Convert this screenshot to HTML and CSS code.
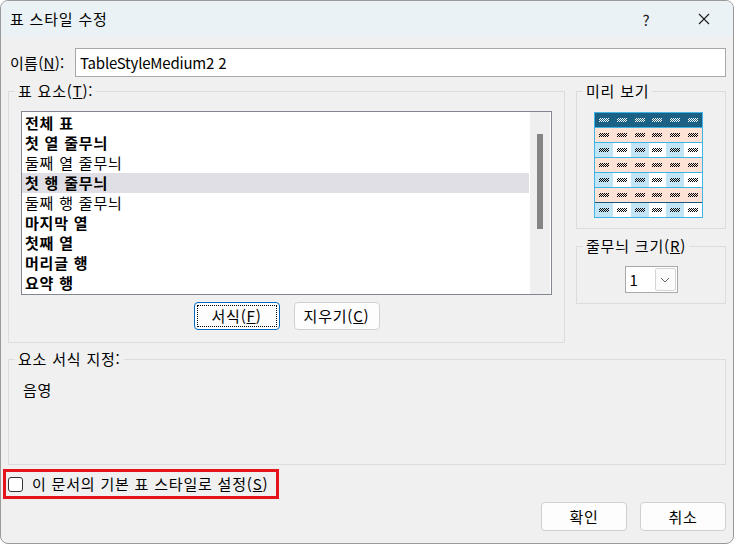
FILE: index.html
```html
<!DOCTYPE html>
<html lang="ko">
<head>
<meta charset="utf-8">
<title>표 스타일 수정</title>
<link rel="stylesheet" href="styles.css">
</head>
<body>
<div class="window">
  <div class="titlebar">
    <span class="title">표 스타일 수정</span>
    <span class="tb-btn help">?</span>
    <span class="tb-btn close"><svg width="12" height="12" viewBox="0 0 12 12"><path d="M1 1L11 11M11 1L1 11" stroke="#1a1a1a" stroke-width="1.1" fill="none"/></svg></span>
  </div>
  <div class="content">
    <div class="name-row">
      <span class="name-label">이름(<u>N</u>):</span>
      <div class="textbox">TableStyleMedium2 2</div>
    </div>
    <div class="main">
      <fieldset class="group elements">
        <legend>표 요소(<u>T</u>):</legend>
        <div class="listbox">
          <ul class="items">
            <li class="b">전체 표</li>
            <li class="b">첫 열 줄무늬</li>
            <li>둘째 열 줄무늬</li>
            <li class="b sel">첫 행 줄무늬</li>
            <li>둘째 행 줄무늬</li>
            <li class="b">마지막 열</li>
            <li class="b">첫째 열</li>
            <li class="b">머리글 행</li>
            <li class="b">요약 행</li>
          </ul>
          <div class="scrollbar"><div class="thumb"></div></div>
        </div>
        <div class="btn-row">
          <button class="btn focused"><span class="focus-ring">서식(<u>F</u>)</span></button>
          <button class="btn">지우기(<u>C</u>)</button>
        </div>
      </fieldset>
      <div class="side">
        <fieldset class="group preview">
          <legend>미리 보기</legend>
          <div class="ptable">
            <div class="prow head"><i><b></b></i><i><b></b></i><i><b></b></i><i><b></b></i><i><b></b></i><i><b></b></i></div>
            <div class="prow band"><i><b></b></i><i><b></b></i><i><b></b></i><i><b></b></i><i><b></b></i><i><b></b></i></div>
            <div class="prow cols"><i><b></b></i><i><b></b></i><i><b></b></i><i><b></b></i><i><b></b></i><i><b></b></i></div>
            <div class="prow band"><i><b></b></i><i><b></b></i><i><b></b></i><i><b></b></i><i><b></b></i><i><b></b></i></div>
            <div class="prow cols"><i><b></b></i><i><b></b></i><i><b></b></i><i><b></b></i><i><b></b></i><i><b></b></i></div>
            <div class="prow band"><i><b></b></i><i><b></b></i><i><b></b></i><i><b></b></i><i><b></b></i><i><b></b></i></div>
            <div class="prow cols total"><i><b></b></i><i><b></b></i><i><b></b></i><i><b></b></i><i><b></b></i><i><b></b></i></div>
          </div>
        </fieldset>
        <fieldset class="group stripe">
          <legend>줄무늬 크기(<u>R</u>)</legend>
          <div class="combo">
            <span class="combo-val">1</span>
            <span class="drop"><svg width="10" height="6" viewBox="0 0 10 6"><path d="M1 1L5 5L9 1" stroke="#666" stroke-width="1" fill="none"/></svg></span>
          </div>
        </fieldset>
      </div>
    </div>
    <fieldset class="group format">
      <legend>요소 서식 지정:</legend>
      <div class="format-text">음영</div>
    </fieldset>
    <div class="check-wrap">
      <span class="checkbox"></span>
      <span class="check-label">이 문서의 기본 표 스타일로 설정(<u>S</u>)</span>
    </div>
    <div class="footer">
      <button class="btn dlg">확인</button>
      <button class="btn dlg">취소</button>
    </div>
  </div>
</div>
</body>
</html>
```
FILE: styles.css
```css
* { box-sizing: border-box; }

html, body {
  margin: 0;
  background: #ffffff;
}

body {
  font-family: "Noto Sans CJK KR", "Noto Sans", sans-serif;
  font-size: 15px;
  color: #000;
  letter-spacing: 0.8px;
}

.window {
  width: 734px;
  height: 544px;
  border: 1px solid #9a9a9a;
  border-radius: 8px;
  overflow: hidden;
  background: #f0f0f0;
  display: flex;
  flex-direction: column;
}

.titlebar {
  height: 36px;
  background: #eaf2f5;
  display: flex;
  align-items: center;
  padding-left: 9px;
  flex: none;
}

.title {
  line-height: 20px;
}

.tb-btn {
  width: 57px;
  height: 36px;
  display: flex;
  align-items: center;
  justify-content: center;
}

.help {
  margin-left: auto;
  color: #1a1a1a;
}

.close {
  margin-right: 1px;
}

.content {
  padding: 11px 7px 0 7px;
  display: flex;
  flex-direction: column;
}

.name-row {
  display: grid;
  grid-template-columns: 67px 1fr;
  align-items: center;
  height: 29px;
}

.name-label {
  padding-left: 2px;
  line-height: 20px;
  letter-spacing: 0.3px;
}

.textbox {
  height: 29px;
  border: 1px solid #a8a8a8;
  background: #fff;
  padding-left: 4px;
  line-height: 27px;
  letter-spacing: -0.2px;
}

.main {
  margin-top: 4px;
  display: grid;
  grid-template-columns: 557px 150px;
  column-gap: 11px;
  align-items: start;
}

.group {
  margin: 0;
  padding: 0;
  border: 1px solid #dcdcdc;
  min-width: 0;
}

.group legend {
  padding: 0 3px;
  margin-left: 6px;
  line-height: 20px;
}

.listbox {
  margin: 10px 12px 0 12px;
  height: 184px;
  border: 1px solid #828790;
  background: #fff;
  display: flex;
  padding-right: 1px;
}

.items {
  flex: 1;
  list-style: none;
  margin: 0;
  padding: 1px 0 0 0;
}

.items li {
  height: 20px;
  line-height: 20px;
  padding-left: 3px;
  white-space: nowrap;
}

.items li.b {
  font-weight: bold;
}

.items li.sel {
  background: #dfdfe5;
}

.scrollbar {
  width: 20px;
  margin-left: 1px;
  background: #efefef;
  padding-top: 22px;
}

.thumb {
  width: 6px;
  height: 95px;
  margin: 0 auto;
  background: #858585;
}

.btn-row {
  display: flex;
  justify-content: center;
  gap: 14px;
  margin-top: 7px;
  padding-bottom: 12px;
}

.btn {
  width: 86px;
  height: 28px;
  border: 1px solid #d0d0d0;
  border-radius: 4px;
  background: #fdfdfd;
  font-family: inherit;
  font-size: 15px;
  letter-spacing: 0.8px;
  color: #000;
  padding: 0;
  line-height: 20px;
}

.btn.focused {
  border-color: #0067c0;
  padding: 2px;
}

.focus-ring {
  display: flex;
  align-items: center;
  justify-content: center;
  width: 100%;
  height: 100%;
  border: 1px dotted #000;
}

.side {
  display: flex;
  flex-direction: column;
  gap: 7px;
}

.preview .ptable {
  margin: 11px 0 10px 17px;
}

.ptable {
  width: 109px;
  border: 1px solid #41b4e6;
  display: flex;
  flex-direction: column;
}

.prow {
  height: 15px;
  display: grid;
  grid-template-columns: repeat(6, 1fr);
  border-top: 1px solid #41b4e6;
}

.prow.head {
  height: 14px;
  border-top: 0;
  background: #1b6185;
}

.prow.total {
  border-top-color: #1b5a7c;
}

.prow i {
  display: flex;
  align-items: center;
  justify-content: center;
}

.prow b {
  display: block;
  width: 10px;
  height: 4px;
  background: repeating-conic-gradient(#000 0% 25%, transparent 0% 50%) 0 0 / 2px 2px;
}

.prow.head b {
  background: repeating-conic-gradient(#fff 0% 25%, transparent 0% 50%) 0 0 / 2px 2px;
}

.prow.band {
  background: #fce1d5;
}

.prow.cols i:nth-child(odd) {
  background: #c1e5f5;
}

.prow.cols i:nth-child(even) {
  background: #fff;
}

.stripe .combo {
  margin: 10px auto 10px auto;
}

.combo {
  width: 53px;
  height: 27px;
  border: 1px solid #a8a8a8;
  background: #fff;
  display: flex;
  align-items: center;
  padding-right: 1px;
}

.combo-val {
  padding-left: 4px;
  line-height: 20px;
}

.drop {
  margin-left: auto;
  width: 21px;
  height: 23px;
  border: 1px solid #d5d5d5;
  border-radius: 2px;
  background: #fbfbfb;
  display: flex;
  align-items: center;
  justify-content: center;
}

.format {
  margin-top: 6px;
  height: 116px;
}

.format-text {
  margin: 11px 0 0 14px;
  line-height: 20px;
}

.check-wrap {
  margin: 4px 0 0 -5px;
  width: 276px;
  height: 30px;
  border: 3px solid #e5141b;
  display: flex;
  align-items: center;
  padding-left: 2px;
}

.checkbox {
  width: 15px;
  height: 15px;
  border: 1px solid #333;
  border-radius: 3px;
  background: #fff;
  flex: none;
}

.check-label {
  margin-left: 9px;
  line-height: 20px;
  white-space: nowrap;
}

.footer {
  margin-top: 3px;
  display: flex;
  justify-content: flex-end;
  gap: 13px;
}

.btn.dlg {
  height: 29px;
}
```
